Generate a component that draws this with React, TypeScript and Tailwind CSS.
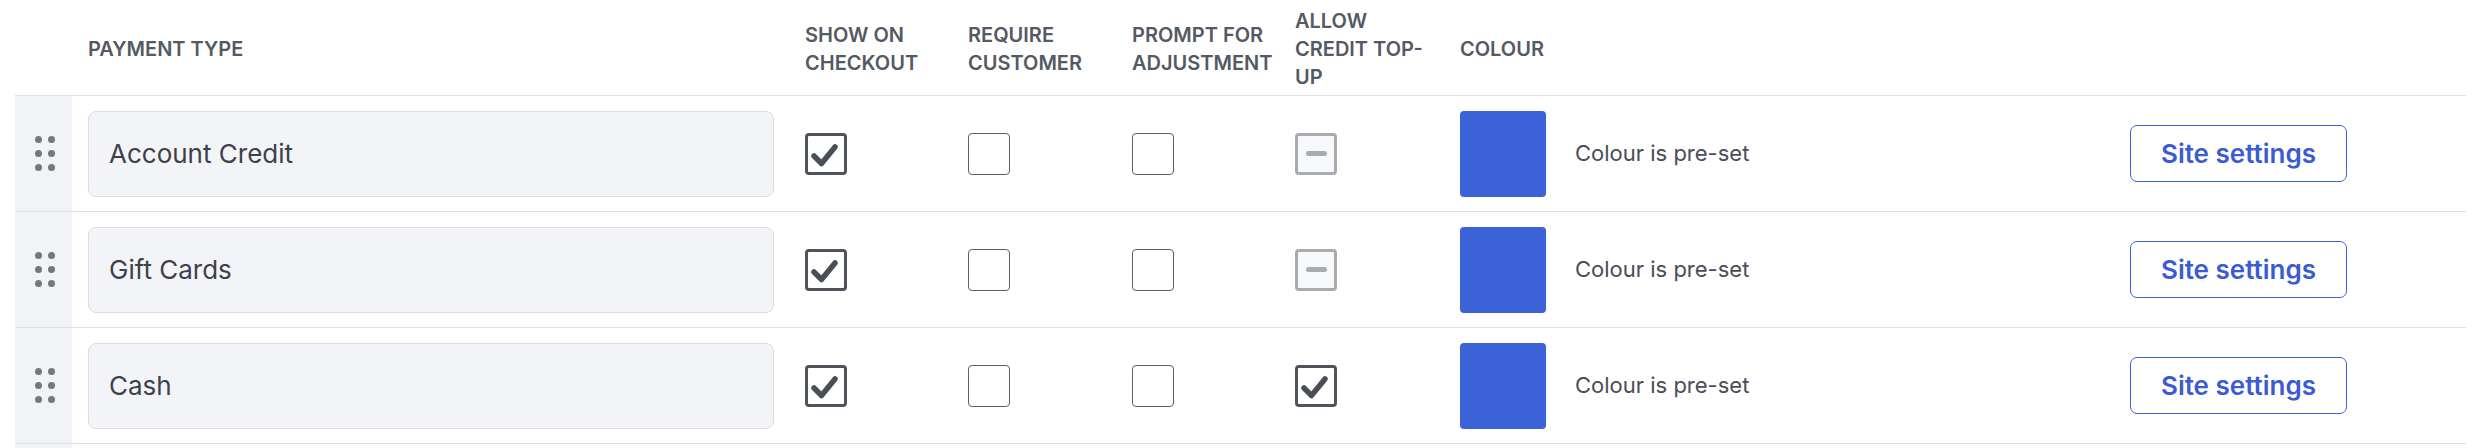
type CheckState = "checked" | "unchecked" | "indeterminate";

const rows: { name: string; show: CheckState; require: CheckState; prompt: CheckState; topUp: CheckState }[] = [
  { name: "Account Credit", show: "checked", require: "unchecked", prompt: "unchecked", topUp: "indeterminate" },
  { name: "Gift Cards", show: "checked", require: "unchecked", prompt: "unchecked", topUp: "indeterminate" },
  { name: "Cash", show: "checked", require: "unchecked", prompt: "unchecked", topUp: "checked" },
];

const cols = "grid grid-cols-[57px_733px_163px_164px_163px_165px_1fr_auto]";

function Checkbox({ state }: { state: CheckState }) {
  if (state === "checked") {
    return (
      <div className="w-[42px] h-[42px] rounded-[4px] border-[3px] border-[#4f535c] bg-white flex items-center justify-center">
        <svg width="36" height="36" viewBox="0 0 36 36">
          <path d="M6 20 L13.5 27.5 L27 11" fill="none" stroke="#4a4e57" strokeWidth="5.5" strokeLinecap="round" strokeLinejoin="round" />
        </svg>
      </div>
    );
  }
  if (state === "indeterminate") {
    return (
      <div className="w-[42px] h-[42px] rounded-[4px] border-[3px] border-[#a9abb1] bg-[#f7f8fa] flex items-center justify-center">
        <div className="w-[21px] h-[5px] rounded-full bg-[#a9abb1]" />
      </div>
    );
  }
  return <div className="w-[42px] h-[42px] rounded-[4px] border-[1.5px] border-[#5c606a] bg-white" />;
}

function DragHandle() {
  return (
    <div className="grid grid-cols-2 gap-x-[6px] gap-y-[7px]">
      {[0, 1, 2, 3, 4, 5].map((i) => (
        <span key={i} className="w-[7px] h-[7px] rounded-full bg-[#74777f]" />
      ))}
    </div>
  );
}

export default function App() {
  return (
    <div className="w-[2474px] h-[448px] overflow-hidden bg-white pl-[15px] pr-[8px] font-['Inter',sans-serif]">
      {/* header */}
      <div className={`${cols} h-[96px] items-center border-b border-[#dddfe3] text-[20px] leading-[28px] font-semibold text-[#555964] uppercase whitespace-nowrap pt-[3px]`}>
        <div />
        <div className="pl-4">Payment type</div>
        <div>Show on<br />checkout</div>
        <div>Require<br />customer</div>
        <div>Prompt for<br />adjustment</div>
        <div>Allow<br />credit top-<br />up</div>
        <div>Colour</div>
        <div />
      </div>

      {rows.map((r) => (
        <div key={r.name} className={`${cols} h-[116px] items-stretch border-b border-[#dddfe3]`}>
          <div className="bg-[#f2f3f6] flex items-center justify-center pl-[2px]">
            <DragHandle />
          </div>
          <div className="flex items-center pl-4 pr-[31px]">
            <div className="w-full h-[86px] rounded-[8px] border border-[#d9dce1] bg-[#f3f4f8] flex items-center px-5 text-[26px] text-[#3e414a]">
              {r.name}
            </div>
          </div>
          <div className="flex items-center"><Checkbox state={r.show} /></div>
          <div className="flex items-center"><Checkbox state={r.require} /></div>
          <div className="flex items-center"><Checkbox state={r.prompt} /></div>
          <div className="flex items-center"><Checkbox state={r.topUp} /></div>
          <div className="flex items-center gap-[29px]">
            <div className="w-[86px] h-[86px] rounded-[4px] bg-[#3b62d6]" />
            <span className="text-[22px] text-[#4a4d56]">Colour is pre-set</span>
          </div>
          <div className="flex items-center pr-[119px]">
            <button className="h-[57px] px-[30px] rounded-[7px] border-[1.5px] border-[#3b62d6] bg-white text-[26px] font-semibold text-[#3b5bd6]">
              Site settings
            </button>
          </div>
        </div>
      ))}

      {/* next row, cut off by the viewport */}
      <div className={`${cols} h-[116px]`}>
        <div className="bg-[#f2f3f6]" />
      </div>
    </div>
  );
}
